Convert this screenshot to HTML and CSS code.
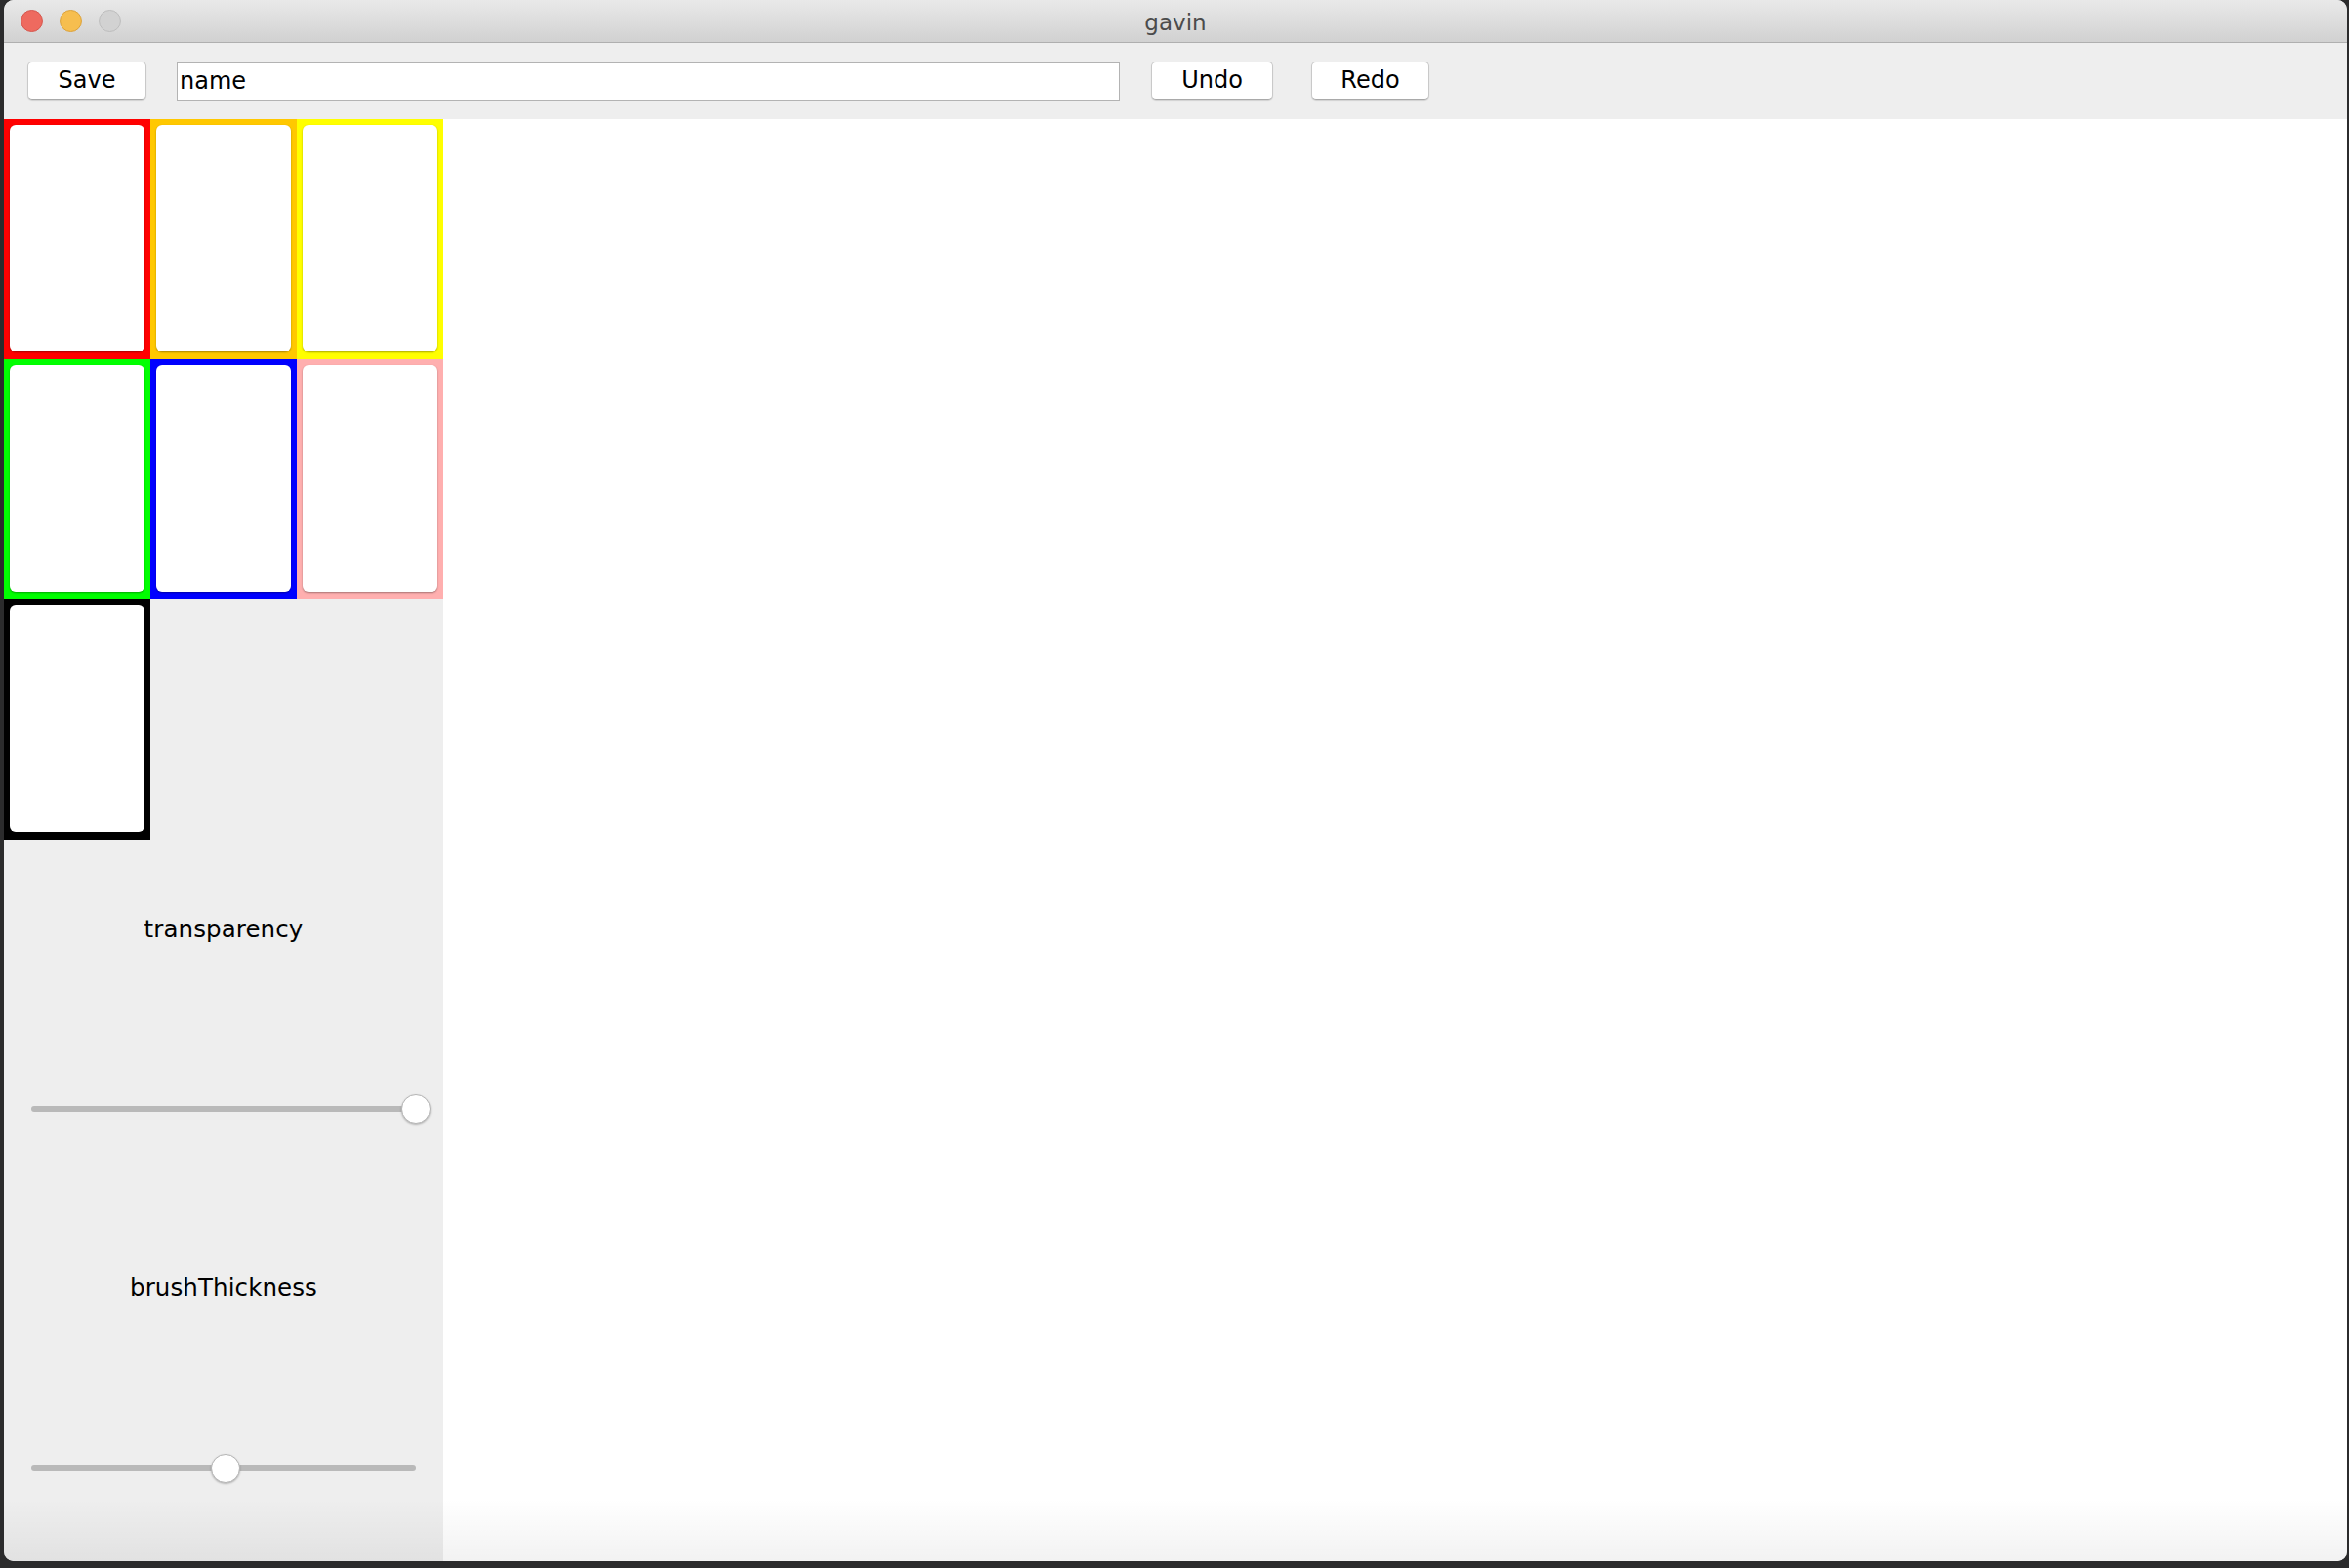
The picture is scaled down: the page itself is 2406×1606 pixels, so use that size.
FILE: index.html
```html
<!DOCTYPE html>
<html>
<head>
<meta charset="utf-8">
<title>gavin</title>
<link rel="stylesheet" href="styles.css">
</head>
<body>
<div class="window">
  <div class="titlebar">
    <div class="lights">
      <span class="light light-close"></span>
      <span class="light light-min"></span>
      <span class="light light-zoom"></span>
    </div>
    <div class="title">gavin</div>
  </div>
  <div class="toolbar">
    <button class="btn btn-save">Save</button>
    <div class="field">name</div>
    <button class="btn btn-undo">Undo</button>
    <button class="btn btn-redo">Redo</button>
  </div>
  <div class="main">
    <div class="panel">
      <div class="swatches">
        <div class="swatch sw-red"><div class="card"></div></div>
        <div class="swatch sw-orange"><div class="card"></div></div>
        <div class="swatch sw-yellow"><div class="card"></div></div>
        <div class="swatch sw-green"><div class="card"></div></div>
        <div class="swatch sw-blue"><div class="card"></div></div>
        <div class="swatch sw-pink"><div class="card"></div></div>
        <div class="swatch sw-black"><div class="card"></div></div>
      </div>
      <div class="controls">
        <div class="row row-label">transparency</div>
        <div class="row row-slider">
          <div class="slider"><div class="track"></div><div class="thumb" style="left:100%"></div></div>
        </div>
        <div class="row row-label">brushThickness</div>
        <div class="row row-slider row-last">
          <div class="slider"><div class="track"></div><div class="thumb" style="left:50.5%"></div></div>
        </div>
      </div>
    </div>
    <div class="canvas"></div>
  </div>
</div>
</body>
</html>
```

FILE: styles.css
```css
html, body {
  margin: 0;
  padding: 0;
}
body {
  width: 2406px;
  height: 1606px;
  background: #2b2b2c;
  font-family: "DejaVu Sans", "Liberation Sans", sans-serif;
  overflow: hidden;
}
.window {
  position: relative;
  margin-left: 4px;
  width: 2400px;
  height: 1599px;
  border-radius: 10px;
  overflow: hidden;
  display: flex;
  flex-direction: column;
  background: #eeeeee;
}
.window::after {
  content: "";
  position: absolute;
  left: 0;
  right: 0;
  bottom: 0;
  height: 64px;
  background: linear-gradient(to bottom, rgba(0,0,0,0), rgba(0,0,0,0.05));
  pointer-events: none;
}
.titlebar {
  height: 43px;
  flex: none;
  border-bottom: 1px solid #afafaf;
  background: linear-gradient(to bottom, #e9e9e9, #d1d1d1);
  display: flex;
  align-items: center;
  position: relative;
}
.lights {
  display: flex;
  gap: 17px;
  padding-left: 17px;
  padding-bottom: 1px;
}
.light {
  width: 21px;
  height: 21px;
  border-radius: 50%;
  border: 1px solid transparent;
}
.light-close { background: #ee6a5f; border-color: #d5574e; }
.light-min { background: #f6be4f; border-color: #dba23c; }
.light-zoom { background: #d2d2d2; border-color: #bdbdbd; }
.title {
  flex: 1;
  text-align: center;
  font-size: 23px;
  color: #4b4b4b;
  margin-right: 120px;
  padding-top: 3px;
}
.toolbar {
  height: 78px;
  flex: none;
  display: flex;
  align-items: center;
  padding-left: 24px;
  background: #eeeeee;
  box-sizing: border-box;
  padding-bottom: 2px;
}
.btn {
  height: 39px;
  box-sizing: border-box;
  background: #ffffff;
  border: 1px solid #c9c9c9;
  border-bottom-color: #a9a9a9;
  border-radius: 5px;
  box-shadow: 0 1px 1px rgba(0,0,0,0.12);
  font-family: "DejaVu Sans", "Liberation Sans", sans-serif;
  font-size: 24px;
  color: #000000;
  padding: 0;
  margin: 0;
}
.btn-save { width: 122px; margin-right: 31px; }
.btn-undo { width: 125px; margin-right: 39px; }
.btn-redo { width: 121px; }
.field {
  width: 966px;
  height: 39px;
  box-sizing: border-box;
  border: 1px solid #b3b3b3;
  background: #ffffff;
  font-size: 24px;
  line-height: 37px;
  padding-left: 2px;
  color: #000000;
  margin-right: 32px;
  margin-top: 2px;
}
.main {
  flex: 1;
  display: flex;
  min-height: 0;
}
.panel {
  width: 450px;
  flex: none;
  display: flex;
  flex-direction: column;
  background: #eeeeee;
}
.swatches {
  display: grid;
  grid-template-columns: repeat(3, 150px);
  grid-auto-rows: 246px;
}
.swatch {
  padding: 6px 6px 8px 6px;
  box-sizing: border-box;
}
.card {
  width: 100%;
  height: 100%;
  background: #ffffff;
  border-radius: 6px;
  box-shadow: 0 1px 2px rgba(0,0,0,0.35);
}
.sw-red { background: #ff0000; }
.sw-orange { background: #ffc800; }
.sw-yellow { background: #ffff00; }
.sw-green { background: #00ff00; }
.sw-blue { background: #0000ff; }
.sw-pink { background: #ffafaf; }
.sw-black { background: #000000; }
.controls {
  flex: 1;
  display: flex;
  flex-direction: column;
}
.row {
  flex: 1;
  display: flex;
  align-items: center;
}
.row-label {
  justify-content: center;
  font-size: 24.5px;
  color: #000000;
  padding-bottom: 2px;
  letter-spacing: 0.1px;
}
.row-slider {
  padding-left: 28px;
}
.row-last {
  padding-bottom: 4px;
}
.slider {
  position: relative;
  width: 394px;
  height: 30px;
  display: flex;
  align-items: center;
}
.track {
  width: 100%;
  height: 6px;
  border-radius: 3px;
  background: #b9b9b9;
}
.thumb {
  position: absolute;
  top: 0;
  width: 30px;
  height: 30px;
  box-sizing: border-box;
  margin-left: -15px;
  border-radius: 50%;
  background: #ffffff;
  border: 1px solid #b5b5b5;
  box-shadow: 0 1px 2px rgba(0,0,0,0.25);
}
.canvas {
  flex: 1;
  background: #ffffff;
}
```
